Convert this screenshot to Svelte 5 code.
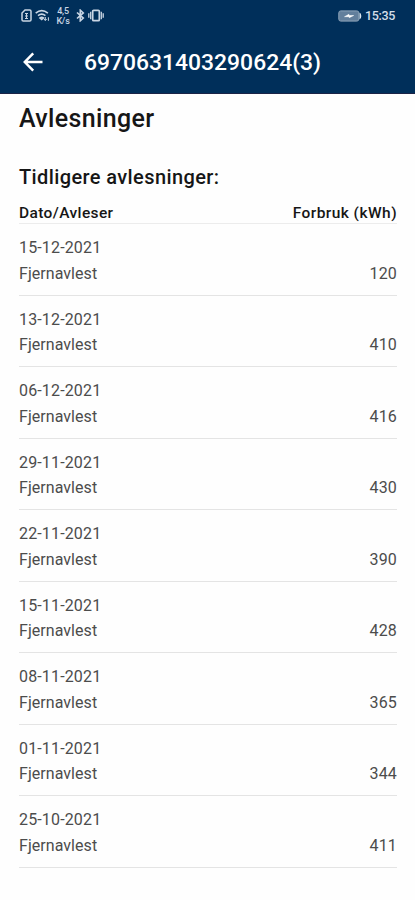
<script>
  const readings = [
    ['15-12-2021', 120],
    ['13-12-2021', 410],
    ['06-12-2021', 416],
    ['29-11-2021', 430],
    ['22-11-2021', 390],
    ['15-11-2021', 428],
    ['08-11-2021', 365],
    ['01-11-2021', 344],
    ['25-10-2021', 411]
  ];
</script>

<div class="screen">
  <header>
    <div class="status">
      <div class="left">
        <svg class="sim" width="11" height="13" viewBox="0 0 11 13" fill="none" stroke="currentColor">
          <path d="M4 1h4.700q1.300 0 1.300 1.300v8.400q0 1.300-1.300 1.300H2.300Q1 12 1 10.700V4z" stroke-width="1.500" />
          <path d="M5.500 4v5.500M4 4.500h3M4 7h3M4 9.500h3" stroke-width="1" />
        </svg>
        <svg class="wifi" width="15" height="13" viewBox="0 0 15 13" fill="none" stroke="currentColor" stroke-width="1.600">
          <path d="M.7 4.200Q6.700-.8 12.900 4.200M3 6.700q3.700-3 7.400 0M5 9q1.700-1.300 3.400 0L6.700 10.500z" />
          <path d="M10.300 8v3.500M9 10l1.300 1.500L11.700 10M13.400 11.800V8.300" stroke-width="1" />
        </svg>
        <div class="speed"><span>4,5</span><span>K/s</span></div>
        <svg class="bt" width="9" height="13" viewBox="0 0 9 13" fill="none" stroke="currentColor" stroke-width="1.600">
          <path d="M1 3.500l6.300 5.600-3 2.700V1.200l3 2.700L1 9.500" />
        </svg>
        <svg class="vibrate" width="16" height="13" viewBox="0 0 16 13" fill="none" stroke="currentColor" stroke-width="1.700">
          <rect x="4.700" y="1.300" width="6.600" height="10.400" rx="1" />
          <path d="M2.700 2.700v7.600M13.300 2.700v7.600M.8 4.300v4.400M15.200 4.300v4.400" stroke-width="1.300" />
        </svg>
      </div>
      <div class="right">
        <svg width="24" height="12" viewBox="0 0 24 12">
          <rect x=".8" y=".9" width="20" height="10.200" rx="2" fill="#627f9c" stroke="#8fa5ba" />
          <path d="M21.500 2.500q1.800.5 1.800 3.500t-1.800 3.500z" fill="#dce6ef" />
          <path d="M6.500 6.700l4.500-2.400v1.200h4.700l-4.500 2.200V6.700z" fill="#fff" stroke="#fff" stroke-width=".5" />
        </svg>
        <span>15:35</span>
      </div>
    </div>
    <div class="bar">
      <svg width="20" height="20" viewBox="0 0 20 20" fill="none" stroke="#fff" stroke-width="2.500">
        <path d="M19.500 10H2M10.200 1.400L1.800 10l8.400 8.600" />
      </svg>
      <div class="title">6970631403290624(3)</div>
    </div>
  </header>
  <main>
    <h1>Avlesninger</h1>
    <h2>Tidligere avlesninger:</h2>
    <div class="head"><span>Dato/Avleser</span><span class="use">Forbruk (kWh)</span></div>
    {#each readings as [date, kwh]}
      <div class="row">
        <div>{date}</div>
        <div class="line"><span class="reader">Fjernavlest</span><span>{kwh}</span></div>
      </div>
    {/each}
  </main>
</div>

<style>
  :global(body) { margin: 0; background: #fefefe; }
  .screen { width: 415px; height: 900px; overflow: hidden; background: #fefefe; font-family: Roboto, sans-serif; }
  header { height: 93px; background: #002f5a; border-bottom: 1px solid #1b2346; box-sizing: content-box; color: #fff; }
  .status { height: 31px; display: flex; justify-content: space-between; align-items: center; padding: 0 20px 0 21px; color: #c9d6e4; }
  .left, .right { display: flex; align-items: center; }
  .wifi { margin-left: 3px; }
  .speed { margin-left: 6px; width: 14px; display: flex; flex-direction: column; align-items: center; font-size: 9px; line-height: 10px; font-weight: 500; letter-spacing: -0.2px; }
  .bt { margin-left: 6px; }
  .vibrate { margin-left: 3px; }
  .right { gap: 3px; font-size: 12.500px; font-weight: 500; letter-spacing: -0.35px; color: #d5dfe9; }
  .bar { height: 62px; display: flex; align-items: center; padding-left: 23px; }
  .title { margin-left: 41px; padding-top: 1px; font-size: 22.900px; font-weight: 500; line-height: 30px; white-space: nowrap; }
  main { padding: 0 18px 0 19px; color: #161616; }
  h1 { margin: 9px 0 0; font-size: 25px; line-height: 32px; font-weight: 500; letter-spacing: 0.35px; }
  h2 { margin: 28px 0 0; font-size: 20px; line-height: 28px; font-weight: 500; letter-spacing: 0.390px; }
  .head { margin-top: 12px; height: 20px; display: flex; justify-content: space-between; font-size: 15.500px; line-height: 20px; font-weight: 500; letter-spacing: 0.380px; border-bottom: 1.500px solid #ececec; }
  .use { letter-spacing: 0.450px; }
  .row { box-sizing: border-box; height: 71.550px; padding-top: 11px; border-bottom: 1.500px solid #e4e4e4; font-size: 16px; line-height: 25.500px; letter-spacing: 0.15px; color: #4c4c4c; }
  .line { display: flex; justify-content: space-between; }
  .reader { letter-spacing: 0.050px; }
</style>
